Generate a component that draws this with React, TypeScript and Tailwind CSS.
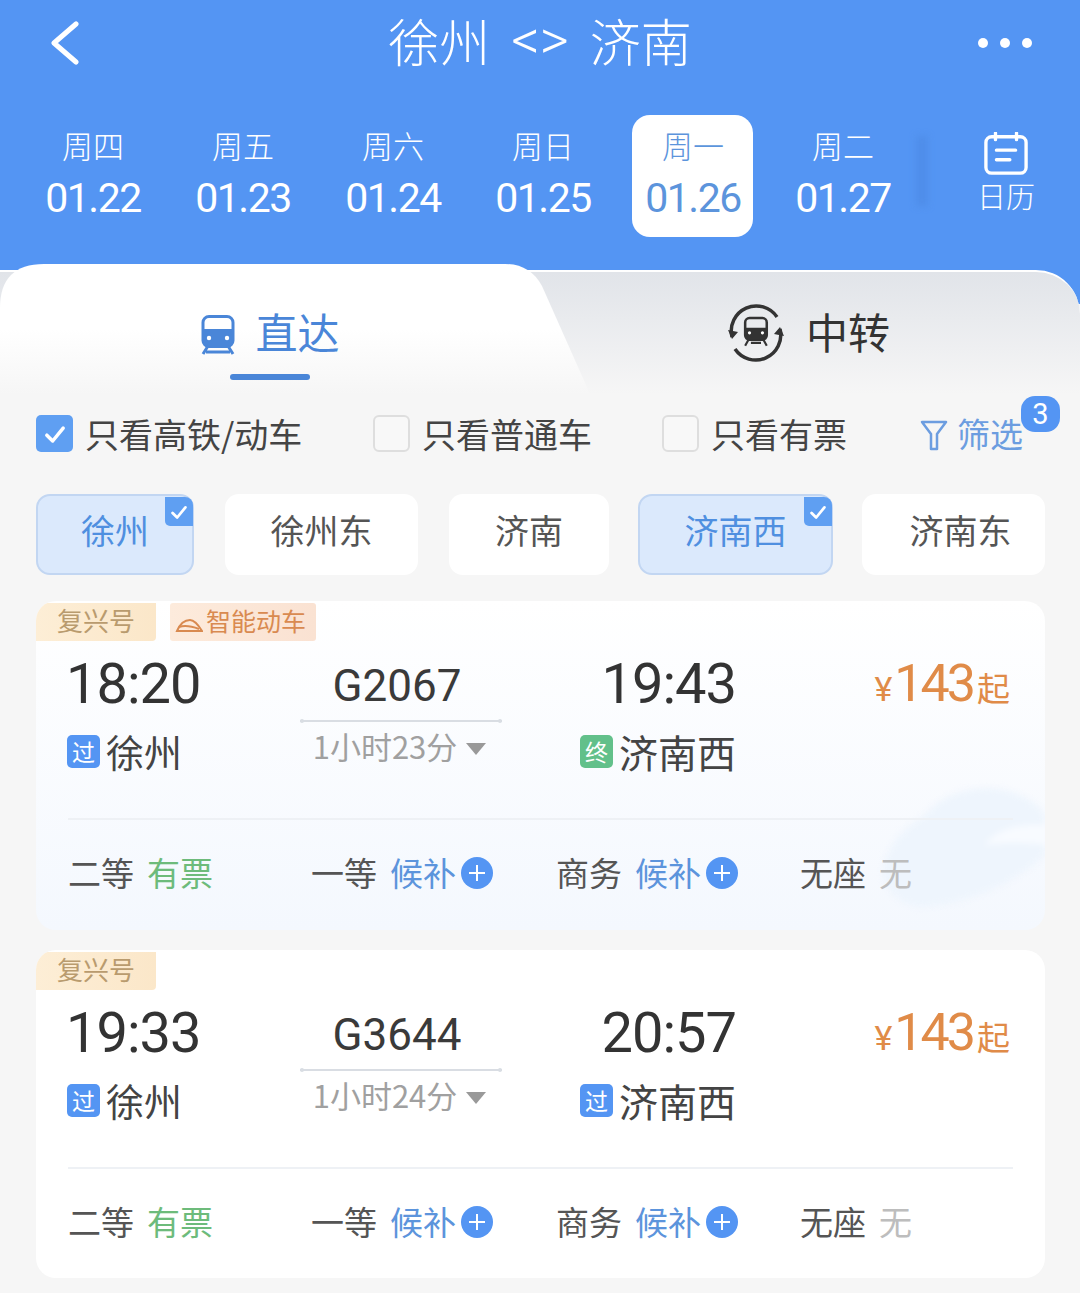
const dates = [
  { day: "周四", date: "01.22" },
  { day: "周五", date: "01.23" },
  { day: "周六", date: "01.24" },
  { day: "周日", date: "01.25" },
  { day: "周一", date: "01.26", active: true },
  { day: "周二", date: "01.27" },
];

const stations = [
  { name: "徐州", width: "w-[158px]", active: true },
  { name: "徐州东", width: "w-[193px]" },
  { name: "济南", width: "w-[160px]" },
  { name: "济南西", width: "w-[195px]", active: true },
  { name: "济南东", width: "w-[183px] pl-[14px]" },
];

const Check = ({ className }: { className: string }) => (
  <svg viewBox="0 0 24 24" fill="none" stroke="white" strokeWidth="3" strokeLinecap="round" strokeLinejoin="round" className={className}>
    <path d="M5 13l5 5 9-11" />
  </svg>
);

const TrainIcon = ({ color, className }: { color: string; className: string }) => (
  <svg viewBox="0 0 36 40" className={className}>
    <rect x="3" y="1.5" width="30" height="30" rx="6" fill="none" stroke={color} strokeWidth="3" />
    <path d="M3 14h30v12a5 5 0 0 1-5 5H8a5 5 0 0 1-5-5z" fill={color} />
    <circle cx="9" cy="23" r="2.2" fill="white" />
    <circle cx="27" cy="23" r="2.2" fill="white" />
    <path d="M8 31l-5 8M28 31l5 8M6 37h24" stroke={color} strokeWidth="3" fill="none" />
  </svg>
);

const TransferIcon = () => (
  <svg viewBox="0 0 56 58" className="w-[56px] h-[58px]">
    <path d="M4 33A25 25 0 0 1 49 13" fill="none" stroke="#333" strokeWidth="3.5" />
    <path d="M52 25A25 25 0 0 1 7 45" fill="none" stroke="#333" strokeWidth="3.5" />
    <path d="M0 26l4 9 6-7zM56 32l-4-9-6 7z" fill="#333" />
    <g transform="translate(15 13) scale(0.72)">
      <rect x="3" y="1.5" width="30" height="30" rx="6" fill="none" stroke="#333" strokeWidth="3.5" />
      <path d="M3 15h30v11a5 5 0 0 1-5 5H8a5 5 0 0 1-5-5z" fill="#333" />
      <circle cx="9" cy="22" r="2.2" fill="white" />
      <circle cx="27" cy="22" r="2.2" fill="white" />
      <path d="M8 31l-5 9M28 31l5 9M11 36h14" stroke="#333" strokeWidth="3" fill="none" />
    </g>
  </svg>
);

const Filter = ({ label, checked, className }: { label: string; checked?: boolean; className: string }) => (
  <div className={`flex items-center gap-[12px] ${className}`}>
    {checked ? (
      <span className="size-[37px] rounded-[5px] bg-[#5f9ff2] flex items-center justify-center">
        <Check className="size-[28px]" />
      </span>
    ) : (
      <span className="size-[37px] rounded-[6px] border-2 border-[#dedede] bg-[#f8f8f8]" />
    )}
    <span className="text-[34px] leading-none text-[#444]">{label}</span>
  </div>
);

const Seat = ({ name, status, tone }: { name: string; status: string; tone: "green" | "blue" | "gray" }) => (
  <div className="flex items-center">
    <span className="text-[33px] leading-none text-[#555]">{name}</span>
    <span
      className={`ml-[13px] text-[33px] leading-none ${
        tone === "green" ? "text-[#6dbb7b]" : tone === "blue" ? "text-[#5c94dc]" : "text-[#bdbdbd]"
      }`}
    >
      {status}
    </span>
    {tone === "blue" && (
      <span className="relative ml-[5px] size-[32px] rounded-full bg-[#5495f3]">
        <span className="absolute left-[8px] top-[15px] w-[16px] h-[2px] bg-white" />
        <span className="absolute left-[15px] top-[8px] w-[2px] h-[16px] bg-white" />
      </span>
    )}
  </div>
);

const StopBadge = ({ text, green }: { text: string; green?: boolean }) => (
  <span
    className={`size-[33px] rounded-[5px] flex items-center justify-center text-[23px] leading-none text-white ${
      green ? "bg-[#62c08a]" : "bg-[#5495f3]"
    }`}
  >
    {text}
  </span>
);

type Train = {
  from: string;
  to: string;
  no: string;
  depart: string;
  arrive: string;
  duration: string;
  endBadge: string;
  endGreen?: boolean;
  smart?: boolean;
};

const TrainCard = ({ train }: { train: Train }) => (
  <div
    className={`relative overflow-hidden w-[1009px] ml-[36px] rounded-[20px] ${
      train.smart ? "h-[329px] bg-gradient-to-b from-white to-[#f4f8fe]" : "h-[328px] bg-white"
    }`}
  >
    {train.smart && (
      <svg viewBox="0 0 165 125" className="absolute right-0 top-[184px] w-[165px] h-[125px] blur-[3px]">
        <path d="M45 30C65 5 100 0 125 5c20 5 35 15 40 25v40c-25 25-75 50-125 52C15 120 0 100 5 75c10-25 25-35 40-45z" fill="#eef5fd" />
        <path d="M165 40c-25-2-50 5-60 20 20-3 40-3 60 0z" fill="#f8fbff" />
      </svg>
    )}
    <div className="flex gap-[14px] h-[40px] pt-[2px]">
      <span className="w-[120px] h-[38px] pb-[4px] rounded-br-[4px] rounded-tl-[6px] bg-gradient-to-r from-[#fdeed6] to-[#fbe7c9] flex items-center justify-center text-[26px] leading-none text-[#b99b6e]">
        复兴号
      </span>
      {train.smart && (
        <span className="w-[146px] h-[38px] pb-[4px] rounded-[3px] bg-gradient-to-r from-[#fdebdc] to-[#fae2d2] flex items-center pl-[5px] gap-[3px] text-[25px] leading-none text-[#d98a50]">
          <svg viewBox="0 0 28 18" className="w-[28px] h-[18px] mt-[10px]">
            <path d="M2 15C5 8 10 4 15 4c4 0 9 6 12 11z" fill="none" stroke="#d98a50" strokeWidth="2" />
            <path d="M4 11c6-2 12-1 20 2" fill="none" stroke="#d98a50" strokeWidth="2" />
          </svg>
          智能动车
        </span>
      )}
    </div>

    <div className="relative flex pl-[30px] pr-[35px] pt-[13px]">
      <div className="w-[234px]">
        <p className="h-[60px] font-['Roboto','Noto_Sans_CJK_SC',sans-serif] text-[56px] leading-[60px] tracking-[-1px] text-[#333]">{train.depart}</p>
        <div className="mt-[15px] ml-[1px] flex items-center gap-[6px]">
          <StopBadge text="过" />
          <span className="text-[38px] leading-[44px] text-[#444]">{train.from}</span>
        </div>
      </div>

      <div className="w-[202px] flex flex-col items-center">
        <p className="mt-[4px] pr-[8px] h-[56px] font-['Roboto',sans-serif] text-[44px] leading-[56px] text-[#3a3a3a]">{train.no}</p>
        <div className="relative w-full h-[2px] mt-[6px] bg-[#d9dde3]">
          <span className="absolute left-0 -top-[1px] size-[4px] rounded-full bg-[#d9dde3]" />
          <span className="absolute right-0 -top-[1px] size-[4px] rounded-full bg-[#d9dde3]" />
        </div>
        <div className="mt-[5px] flex items-center pr-[3px]">
          <span className="text-[31px] leading-[38px] text-[#a0a0a0]">{train.duration}</span>
          <span className="ml-[9px] mt-[5px] w-0 h-0 border-x-[10px] border-x-transparent border-t-[12px] border-t-[#999]" />
        </div>
      </div>

      <div className="w-[234px] flex flex-col items-end">
        <p className="h-[60px] font-['Roboto',sans-serif] text-[56px] leading-[60px] tracking-[-1px] text-[#333]">{train.arrive}</p>
        <div className="mt-[15px] flex items-center gap-[6px]">
          <StopBadge text={train.endBadge} green={train.endGreen} />
          <span className="text-[39px] leading-[44px] text-[#444]">{train.to}</span>
        </div>
      </div>

      <div className="flex-1 flex items-baseline justify-end h-[60px] text-[#e08b48]">
        <span className="font-['Roboto',sans-serif] text-[34px] leading-[60px] mr-[2px]">¥</span>
        <span className="font-['Roboto',sans-serif] text-[52px] leading-[60px] tracking-[-3px]">143</span>
        <span className="ml-[4px] text-[33px] leading-[60px]">起</span>
      </div>
    </div>

    <div className="relative mt-[45px] mx-[32px] h-[2px] bg-[#eef1f5]" />

    <div className="relative grid grid-cols-[243px_245px_244px_1fr] pl-[32px] pt-[36px]">
      <Seat name="二等" status="有票" tone="green" />
      <Seat name="一等" status="候补" tone="blue" />
      <Seat name="商务" status="候补" tone="blue" />
      <Seat name="无座" status="无" tone="gray" />
    </div>
  </div>
);

export default function App() {
  return (
    <div className="w-[1080px] h-[1293px] overflow-hidden bg-[#f6f6f6] font-['Noto_Sans_CJK_SC','Noto_Sans',sans-serif]">
      <header className="relative h-[304px] bg-[#5495f3] text-white">
        <div className="grid grid-cols-[1fr_auto_1fr] items-center h-[86px] px-[48px]">
          <svg viewBox="0 0 32 44" fill="none" stroke="white" strokeWidth="5" strokeLinecap="round" strokeLinejoin="round" className="w-[32px] h-[44px]">
            <path d="M28 3L6 22l22 19" />
          </svg>
          <h1 className="flex items-center gap-[21px] -mt-[6px] text-[51px] leading-none font-light">
            <span>徐州</span>
            <span className="font-['Roboto',sans-serif] text-[56px]">&lt;&gt;</span>
            <span>济南</span>
          </h1>
          <div className="flex gap-[12px] justify-end">
            <span className="size-[10px] rounded-full bg-white" />
            <span className="size-[10px] rounded-full bg-white" />
            <span className="size-[10px] rounded-full bg-white" />
          </div>
        </div>

        <div className="relative flex pl-[18px] pt-[29px]">
          {dates.map((d) => (
            <div key={d.date} className="relative w-[150px] h-[122px] flex flex-col items-center pt-[9px]">
              {d.active && <span className="absolute left-[14px] top-0 w-[121px] h-[122px] rounded-[18px] bg-white" />}
              <span className={`relative text-[31px] leading-[42px] font-light ${d.active ? "text-[#5c94dc]" : ""}`}>{d.day}</span>
              <span className={`relative mt-[8px] font-['Roboto',sans-serif] text-[41px] leading-[48px] tracking-[-1.5px] ${d.active ? "text-[#5c94dc]" : ""}`}>
                {d.date}
              </span>
            </div>
          ))}
          <span className="absolute left-[916px] top-[50px] w-[12px] h-[70px] bg-[#4f8eea] blur-[3px]" />
          <div className="flex-1 flex flex-col items-center ml-[14px] pt-[17px]">
            <svg viewBox="0 0 46 46" fill="none" stroke="white" strokeWidth="3.5" strokeLinecap="round" className="size-[44px]">
              <rect x="2" y="5" width="42" height="38" rx="6" />
              <path d="M12 1v7M34 1v7M13 19h20M13 29h14" />
            </svg>
            <span className="mt-[2px] text-[29px] leading-[34px] font-light">日历</span>
          </div>
        </div>
      </header>

      <div className="relative -mt-[40px] h-[130px]">
        <div className="absolute inset-x-0 top-[6px] h-[124px] rounded-tr-[44px] border-t-2 border-white bg-gradient-to-b from-[#e1e4e9] to-[#f6f6f6]" />
        <div className="absolute left-0 top-0 w-[600px] h-[130px] bg-gradient-to-b from-white via-white to-[#f6f6f6] [clip-path:path('M0_44Q0_0_44_0L505_0Q530_0_542_22L590_130L0_130Z')]" />
        <div className="relative grid grid-cols-2 h-[130px]">
          <div className="flex flex-col items-center">
            <div className="flex items-center gap-[19px] h-[82px] mt-[28px]">
              <TrainIcon color="#4a86d8" className="w-[36px] h-[40px] mt-[3px]" />
              <span className="text-[42px] leading-none text-[#4a86d8] -mt-[4px]">直达</span>
            </div>
            <span className="w-[80px] h-[6px] rounded-full bg-[#4a86d8]" />
          </div>
          <div className="flex items-start justify-center -ml-[2px]">
            <div className="flex items-center gap-[22px] h-[82px] mt-[28px]">
              <TransferIcon />
              <span className="text-[42px] leading-none text-[#333] -mt-[4px]">中转</span>
            </div>
          </div>
        </div>
      </div>

      <div className="relative flex items-center h-[75px] pl-[36px] mt-[2px]">
        <Filter label="只看高铁/动车" checked className="w-[337px]" />
        <Filter label="只看普通车" className="w-[289px]" />
        <Filter label="只看有票" className="w-[258px]" />
        <svg viewBox="0 0 28 32" fill="none" stroke="#6c9de0" strokeWidth="2.5" strokeLinejoin="round" className="w-[28px] h-[32px] mt-[2px]">
          <path d="M2 3h24L17 15v15h-6V15z" />
        </svg>
        <span className="ml-[9px] text-[33px] leading-none text-[#6c9de0]">筛选</span>
        <span className="absolute left-[1021px] top-[0px] w-[39px] h-[36px] rounded-[14px] bg-[#5495f3] flex items-center justify-center font-['Roboto',sans-serif] text-[29px] leading-none text-white">
          3
        </span>
      </div>

      <div className="flex pl-[36px] pt-[23px]">
        {stations.map((s, i) => (
          <div
            key={s.name}
            className={`relative h-[81px] ${s.width} shrink-0 rounded-[14px] flex items-center justify-center text-[34px] leading-none pb-[9px] ${
              i === 0 ? "mr-[31px]" : i === 1 ? "mr-[31px]" : "mr-[29px]"
            } ${s.active ? "bg-[#dbe9fc] border-2 border-[#c2d6f2] text-[#4f8fe0]" : "bg-white text-[#555]"}`}
          >
            {s.name}
            {s.active && (
              <span className="absolute -right-[1px] top-[1px] w-[28px] h-[29px] rounded-bl-[5px] rounded-tr-[8px] bg-[#5f9ff2] flex items-center justify-center">
                <Check className="size-[22px]" />
              </span>
            )}
          </div>
        ))}
      </div>

      <div className="flex flex-col gap-[20px] pt-[26px]">
        <TrainCard train={{ from: "徐州", to: "济南西", no: "G2067", depart: "18:20", arrive: "19:43", duration: "1小时23分", endBadge: "终", endGreen: true, smart: true }} />
        <TrainCard train={{ from: "徐州", to: "济南西", no: "G3644", depart: "19:33", arrive: "20:57", duration: "1小时24分", endBadge: "过" }} />
      </div>
    </div>
  );
}
